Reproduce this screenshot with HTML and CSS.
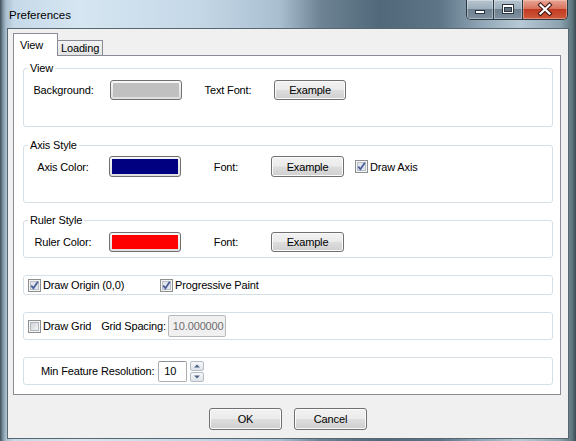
FILE: index.html
```html
<!DOCTYPE html>
<html>
<head>
<meta charset="utf-8">
<link rel="stylesheet" href="styles.css">
</head>
<body>
<div class="window">
  <div class="titlebar">
    <span class="title">Preferences</span>
    <div class="caption-btns">
      <div class="cbtn cmin"><svg width="26" height="19" viewBox="0 0 26 19"><rect x="8.5" y="10.5" width="9" height="3" fill="#fff" stroke="#2b3640" stroke-width="1"/></svg></div>
      <div class="cbtn cmax"><svg width="28" height="19" viewBox="0 0 28 19"><rect x="8.5" y="4.5" width="11" height="9" fill="#fff" stroke="#2b3640" stroke-width="1"/><rect x="10.5" y="7.5" width="7" height="4" fill="#5f6f7c" stroke="#2b3640" stroke-width="1"/></svg></div>
      <div class="cbtn cclose"><svg width="44" height="19" viewBox="0 0 44 19"><path d="M17.5 5 L26.5 13.5 M26.5 5 L17.5 13.5" stroke="#3a1410" stroke-width="4.2" stroke-linecap="square"/><path d="M17.5 5 L26.5 13.5 M26.5 5 L17.5 13.5" stroke="#fff" stroke-width="2.2" stroke-linecap="square"/></svg></div>
    </div>
  </div>
  <div class="client">
    <div class="tabs">
      <div class="tab active">View</div>
      <div class="tab inactive">Loading</div>
    </div>
    <div class="panel">
      <div class="group g-view">
        <div class="legend">View</div>
        <div class="row r-view">
          <div class="cell1 c1-view">Background:</div>
          <div class="swatch sw-view"><div class="fill" style="background:#c0c0c0"></div></div>
          <div class="cell2 c2-view">Text Font:</div>
          <button class="btn btn-view">Example</button>
        </div>
      </div>
      <div class="group g-axis">
        <div class="legend">Axis Style</div>
        <div class="row r-axis">
          <div class="cell1">Axis Color:</div>
          <div class="swatch"><div class="fill" style="background:#000080"></div></div>
          <div class="cell2">Font:</div>
          <button class="btn">Example</button>
          <label class="chk-item chk-axis">
            <svg class="chk" width="13" height="13" viewBox="0 0 13 13"><rect x="0.5" y="0.5" width="12" height="12" fill="#f4f4f4" stroke="#8e8f8f"/><rect x="2.5" y="2.5" width="8" height="8" fill="#e2e6ec" stroke="#b9bfc7"/><path d="M3.2 6.6 L5.4 9.2 L9.8 2.8" fill="none" stroke="#4b5f9a" stroke-width="1.8"/></svg>
            <span>Draw Axis</span>
          </label>
        </div>
      </div>
      <div class="group g-ruler">
        <div class="legend">Ruler Style</div>
        <div class="row r-ruler">
          <div class="cell1">Ruler Color:</div>
          <div class="swatch"><div class="fill" style="background:#ff0000"></div></div>
          <div class="cell2">Font:</div>
          <button class="btn">Example</button>
        </div>
      </div>
      <div class="group g-origin">
        <div class="row r-origin">
          <label class="chk-item chk-origin">
            <svg class="chk" width="13" height="13" viewBox="0 0 13 13"><rect x="0.5" y="0.5" width="12" height="12" fill="#f4f4f4" stroke="#8e8f8f"/><rect x="2.5" y="2.5" width="8" height="8" fill="#e2e6ec" stroke="#b9bfc7"/><path d="M3.2 6.6 L5.4 9.2 L9.8 2.8" fill="none" stroke="#4b5f9a" stroke-width="1.8"/></svg>
            <span>Draw Origin (0,0)</span>
          </label>
          <label class="chk-item">
            <svg class="chk" width="13" height="13" viewBox="0 0 13 13"><rect x="0.5" y="0.5" width="12" height="12" fill="#f4f4f4" stroke="#8e8f8f"/><rect x="2.5" y="2.5" width="8" height="8" fill="#e2e6ec" stroke="#b9bfc7"/><path d="M3.2 6.6 L5.4 9.2 L9.8 2.8" fill="none" stroke="#4b5f9a" stroke-width="1.8"/></svg>
            <span>Progressive Paint</span>
          </label>
        </div>
      </div>
      <div class="group g-grid">
        <div class="row r-grid">
          <label class="chk-item">
            <svg class="chk" width="13" height="13" viewBox="0 0 13 13"><defs><linearGradient id="ug" x1="0" y1="0" x2="1" y2="1"><stop offset="0" stop-color="#cbcfd5"/><stop offset="1" stop-color="#f7f7f7"/></linearGradient></defs><rect x="0.5" y="0.5" width="12" height="12" fill="#f4f4f4" stroke="#8e8f8f"/><rect x="2.5" y="2.5" width="8" height="8" fill="url(#ug)" stroke="#b4b9c0"/></svg>
            <span>Draw Grid</span>
          </label>
          <span class="gs-label">Grid Spacing:</span>
          <div class="input disabled">10.000000</div>
        </div>
      </div>
      <div class="group g-min">
        <div class="row r-min">
          <span>Min Feature Resolution:</span>
          <div class="input num">10</div>
          <div class="spin">
            <div class="sbtn"><svg width="12" height="8" viewBox="0 0 12 8"><path d="M3 5.5 L6 2.5 L9 5.5 Z" fill="#4d6185"/></svg></div>
            <div class="sbtn"><svg width="12" height="8" viewBox="0 0 12 8"><path d="M3 2.5 L6 5.5 L9 2.5 Z" fill="#4d6185"/></svg></div>
          </div>
        </div>
      </div>
    </div>
    <div class="actions">
      <button class="btn dlg">OK</button>
      <button class="btn dlg">Cancel</button>
    </div>
  </div>
</div>
</body>
</html>
```
FILE: styles.css
```css
html, body {
  margin: 0;
  padding: 0;
}
body {
  font-family: "Liberation Sans", Arial, sans-serif;
  font-size: 11px;
  letter-spacing: -0.15px;
  color: #000;
  background: #6f8290;
}
.window {
  width: 576px;
  height: 441px;
  box-sizing: border-box;
  display: flex;
  flex-direction: column;
  background:
    linear-gradient(90deg, #3f4e59 0px, #7f93a2 3px, #a9bece 6px, #c6d9e8 14px, #d6e6f2 80px, #c4d7e7 200px, #a9bfd0 280px, #6e8494 320px, #50687a 380px, #5d7587 440px, #8fa5b5 480px, #b7c9d6 520px, #8ea3b1 560px, #5f777f 572px, #3b4a52 576px);
}
.titlebar {
  height: 28px;
  display: flex;
  justify-content: space-between;
  align-items: flex-start;
  flex: none;
}
.title {
  font-size: 11.5px;
  letter-spacing: 0;
  line-height: 14px;
  margin-top: 8px;
  padding-left: 9px;
  color: #000;
}
.caption-btns {
  display: flex;
  margin-right: 8px;
  height: 20px;
  box-sizing: border-box;
  border: 1px solid #2c3842;
  border-top: none;
  border-radius: 0 0 5px 5px;
  overflow: hidden;
}
.cbtn {
  height: 19px;
  display: flex;
  align-items: center;
  justify-content: center;
}
.cmin, .cmax {
  background: linear-gradient(#b6c4cf 0%, #9eafbd 45%, #6f8190 50%, #7e909e 100%);
  box-shadow: inset 0 0 0 1px rgba(255,255,255,0.35);
}
.cmin { width: 26px; }
.cmax { width: 28px; border-left: 1px solid #2c3842; }
.cclose {
  width: 44px;
  border-left: 1px solid #2c3842;
  background: linear-gradient(#e8a594 0%, #d7745f 45%, #c23a22 50%, #cf5a3c 100%);
  box-shadow: inset 0 0 0 1px rgba(255,220,210,0.4);
}
.client {
  flex: 1;
  margin: 0 7px 2px 7px;
  background: #f0f0f0;
  border: 1px solid #57666f;
  display: flex;
  flex-direction: column;
}
.tabs {
  display: flex;
  align-items: flex-end;
  height: 22px;
  margin-top: 4px;
  padding-left: 5px;
  position: relative;
  z-index: 1;
}
.tab {
  box-sizing: border-box;
  border: 1px solid #898c95;
  border-bottom: none;
}
.tab.active {
  width: 45px;
  height: 23px;
  margin-bottom: -1px;
  background: #fff;
  padding-left: 6px;
  line-height: 22px;
}
.tab.inactive {
  width: 45px;
  height: 15px;
  border-left: none;
  background: linear-gradient(#f3f3f3, #e4e4e4);
  padding-left: 3px;
  line-height: 15px;
}
.panel {
  margin-left: 5px;
  width: 548px;
  height: 340px;
  box-sizing: border-box;
  border: 1px solid #898c95;
  background: #fff;
  padding: 12px 7px 0 9px;
  flex: none;
}
.group {
  border: 1px solid #d5dfe5;
  border-radius: 3px;
  box-sizing: border-box;
}
.legend {
  width: fit-content;
  background: #fff;
  line-height: 13px;
  margin: -7px 0 0 4px;
  padding: 0 2px;
}
.g-view { height: 59px; }
.g-axis { height: 58px; margin-top: 18px; }
.g-ruler { height: 38px; margin-top: 17px; }
.g-origin { height: 20px; margin-top: 17px; }
.g-grid { height: 28px; margin-top: 17px; }
.g-min { height: 28px; margin-top: 17px; }

.row {
  display: flex;
  align-items: center;
}
.r-view { margin-top: 5px; height: 20px; }
.r-axis { margin-top: 4px; height: 21px; }
.r-ruler { margin-top: 5px; height: 20px; }
.cell1 {
  width: 78px;
  margin-right: 7px;
  text-align: center;
}
.c1-view { width: 79px; }
.cell2 {
  width: 90px;
  text-align: center;
}
.c2-view { width: 92px; }
.swatch {
  width: 72px;
  height: 100%;
  box-sizing: border-box;
  border: 1px solid #707070;
  border-radius: 3px;
  padding: 2px;
  background: linear-gradient(#f7f7f7, #dedede);
}
.fill {
  width: 100%;
  height: 100%;
}
.btn {
  width: 73px;
  height: 100%;
  box-sizing: border-box;
  border: 1px solid #707070;
  border-radius: 3px;
  background: linear-gradient(#f2f2f2 0%, #ebebeb 48%, #dddddd 52%, #cfcfcf 100%);
  box-shadow: inset 0 0 0 1px #fbfbfb;
  font-family: inherit;
  font-size: 11px;
  letter-spacing: -0.15px;
  color: #000;
  padding: 0;
}
.btn-view { width: 72px; }
.chk-item {
  display: flex;
  align-items: center;
  gap: 2px;
}
.chk { flex: none; display: block; }
.chk-axis { margin-left: 11px; }
.r-origin {
  height: 18px;
  padding-left: 4px;
}
.chk-origin { width: 132px; }
.r-grid {
  height: 26px;
  padding-left: 4px;
}
.gs-label { margin-left: 10px; }
.input {
  box-sizing: border-box;
  border: 1px solid #abadb3;
  border-top-color: #8e9198;
  border-radius: 2px;
  padding-left: 4px;
  display: flex;
  align-items: center;
}
.input.disabled {
  margin-left: 2px;
  width: 58px;
  height: 22px;
  background: #f0f0f0;
  border-color: #b7b9bd;
  color: #6d6d6d;
}
.r-min {
  height: 26px;
  padding-left: 17px;
}
.input.num {
  margin-left: 4px;
  width: 29px;
  height: 21px;
  background: #fff;
  padding-left: 5px;
}
.spin {
  margin-left: 3px;
  width: 14px;
  display: flex;
  flex-direction: column;
  gap: 1px;
}
.sbtn {
  height: 10px;
  box-sizing: border-box;
  border: 1px solid #b5bcc6;
  border-radius: 2px;
  background: linear-gradient(#f6f8fa, #dfe4ea);
  display: flex;
  align-items: center;
  justify-content: center;
}
.sbtn svg { display: block; }
.actions {
  display: flex;
  justify-content: center;
  gap: 12px;
  margin-top: 13px;
}
.btn.dlg {
  height: 22px;
  width: 73px;
}
```
